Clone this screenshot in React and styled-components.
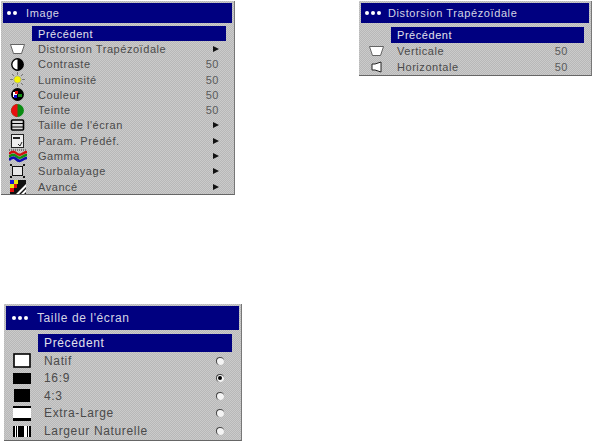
import React from 'react'
import styled, { createGlobalStyle } from 'styled-components'

const Global = createGlobalStyle`
html, body {
  margin: 0;
  padding: 0;
  background: #fff;
  overflow: hidden;
}
`

const TrapezeV = () => (
  <svg width="15" height="10" viewBox="0 0 15 10">
    <path d="M0.5 0.5H14.5L11.5 9.5H3.5Z" fill="#fff" stroke="#444" strokeWidth="0.8" />
  </svg>
)
const TrapezeH = () => (
  <svg width="11" height="12" viewBox="0 0 11 12">
    <path d="M10 1V11L4 9H1V3H4Z" fill="#fff" stroke="#222" strokeWidth="1" />
  </svg>
)
const Contrast = () => (
  <svg width="13" height="13" viewBox="0 0 13 13">
    <circle cx="6.5" cy="6.5" r="6.4" fill="#000" />
    <path d="M6.5 1.5A5 5 0 0 0 6.5 11.5Z" fill="#fff" />
  </svg>
)
const Sun = () => (
  <svg width="15" height="15" viewBox="0 0 15 15">
    <path d="M7.5 0V3M7.5 12V15M0 7.5H3M12 7.5H15M2 2L4 4M11 11L13 13M13 2L11 4M4 11L2 13" stroke="#777" strokeWidth="1" />
    <circle cx="7.5" cy="7.5" r="3.6" fill="#f6f600" stroke="#999" strokeWidth="0.6" />
  </svg>
)
const ColorWheel = () => (
  <svg width="13" height="13" viewBox="0 0 13 13">
    <circle cx="6.5" cy="6.5" r="6.4" fill="#000" />
    <path d="M2 4H6V9H2Z" fill="#fff" />
    <rect x="3" y="7" width="3" height="3" fill="#1010d0" />
    <rect x="4" y="3" width="3" height="3" fill="#e01010" />
    <rect x="7" y="6" width="4" height="3" fill="#109010" />
  </svg>
)
const Tint = () => (
  <svg width="13" height="13" viewBox="0 0 13 13">
    <circle cx="6.5" cy="6.5" r="6.4" fill="#0a8a12" />
    <path d="M6.5 0.1A6.4 6.4 0 0 0 6.5 12.9Z" fill="#e81010" />
  </svg>
)
const ScreenSize = () => (
  <svg width="15" height="12" viewBox="0 0 15 12">
    <rect x="1.5" y="1" width="12" height="10" rx="1" fill="#ddd" stroke="#000" strokeWidth="1.6" />
    <path d="M1 4.5H14M1 8H14" stroke="#000" strokeWidth="1.2" />
  </svg>
)
const Preset = () => (
  <svg width="13" height="14" viewBox="0 0 13 14">
    <rect x="0.5" y="0.5" width="12" height="13" fill="#eee" stroke="#222" />
    <rect x="2" y="3" width="7" height="2" fill="#222" />
    <path d="M7 10L9 12L11 8" fill="none" stroke="#222" />
  </svg>
)
const Gamma = () => (
  <svg width="18" height="14" viewBox="0 0 18 14">
    <path d="M0 1H18" stroke="#333" strokeDasharray="1 1" />
    <path d="M0 5Q4 1 7 4T13 5T18 3" fill="none" stroke="#d01010" strokeWidth="2.4" />
    <path d="M0 8Q4 4 7 7T13 8T18 6" fill="none" stroke="#109010" strokeWidth="2.4" />
    <path d="M0 11Q4 7 7 10T13 11T18 9" fill="none" stroke="#1010b0" strokeWidth="2.6" />
  </svg>
)
const Overscan = () => (
  <svg width="15" height="14" viewBox="0 0 15 14">
    <rect x="2.5" y="2.5" width="10" height="9" fill="#e8e8e8" stroke="#111" />
    <rect x="0" y="0" width="2" height="2" fill="#111" />
    <rect x="13" y="0" width="2" height="2" fill="#111" />
    <rect x="0" y="12" width="2" height="2" fill="#111" />
    <rect x="13" y="12" width="2" height="2" fill="#111" />
  </svg>
)
const Advanced = () => (
  <svg width="16" height="14" viewBox="0 0 16 14">
    <rect width="16" height="14" fill="#111" />
    <path d="M6 14L16 4V7L9 14ZM11 14L16 9V12L14 14Z" fill="#fff" />
    <rect x="0" y="0" width="4" height="4" fill="#1818d0" />
    <rect x="4" y="0" width="4" height="4" fill="#e8e810" />
    <rect x="0" y="4" width="4" height="4" fill="#e8e810" />
    <rect x="4" y="4" width="3" height="4" fill="#e01010" />
    <rect x="0" y="8" width="4" height="4" fill="#e01010" />
  </svg>
)
const WhiteBox = () => (
  <svg width="18" height="15" viewBox="0 0 18 15">
    <rect x="1" y="1" width="16" height="13" fill="#fff" stroke="#000" strokeWidth="1.6" />
  </svg>
)
const BlackWide = () => (
  <svg width="18" height="11" viewBox="0 0 18 11">
    <rect width="18" height="11" fill="#000" />
  </svg>
)
const BlackSquare = () => (
  <svg width="16" height="13" viewBox="0 0 16 13">
    <rect width="16" height="13" fill="#000" />
  </svg>
)
const ExtraLarge = () => (
  <svg width="18" height="15" viewBox="0 0 18 15">
    <rect width="18" height="15" fill="#fff" />
    <rect width="18" height="2" fill="#000" />
    <rect y="12" width="18" height="3" fill="#000" />
  </svg>
)
const NaturalWidth = () => (
  <svg width="18" height="11" viewBox="0 0 18 11">
    <rect width="18" height="11" fill="#fff" />
    <path d="M0 0H2V11H0ZM3 0H4V11H3ZM5 0H11V11H5ZM14 0H15V11H14ZM16 0H18V11H16Z" fill="#000" />
  </svg>
)

const Page = styled.div`
  display: grid;
  grid-template-columns: 359px 233px;
  align-items: start;
  height: 441px;
  overflow: hidden;
  font-family: "Liberation Sans", Arial, sans-serif;
`

const LeftColumn = styled.div`
  display: flex;
  flex-direction: column;
  gap: 109px;
  padding: 1px 0 0 1px;
`

const Panel = styled.div`
  width: ${(p) => p.$width}px;
  margin-left: ${(p) => p.$indent || 0}px;
  margin-top: ${(p) => p.$top || 0}px;
  flex: none;
  box-sizing: border-box;
  padding: 2px 2px 0;
  border-right: 1px solid #777;
  border-bottom: 1px solid #666;
  background-color: #c2c2c2;
  background-image: repeating-conic-gradient(#b8b8b8 0 25%, #cbcbcb 0 50%);
  background-size: 2px 2px;
`

const TitleBar = styled.div`
  display: flex;
  align-items: center;
  gap: ${(p) => p.$gap}px;
  height: ${(p) => p.$height}px;
  padding-left: ${(p) => p.$pad}px;
  background: #000080;
  color: #d4d4e4;
  font-size: ${(p) => p.$size}px;
  letter-spacing: ${(p) => p.$spacing}px;
`

const Dots = styled.span`
  display: flex;
  gap: 2px;
`

const Dot = styled.i`
  width: 4px;
  height: 4px;
  border-radius: 50%;
  background: #fff;
`

const Rows = styled.div`
  padding: ${(p) => p.$pad}px ${(p) => p.$right}px 0 0;
`

const Row = styled.div`
  display: flex;
  align-items: center;
  height: ${(p) => p.$height}px;
  font-size: ${(p) => p.$size}px;
  letter-spacing: ${(p) => p.$spacing}px;
  color: #4a4a4a;
`

const IconCell = styled.span`
  width: ${(p) => p.$width}px;
  flex: none;
  display: flex;
  justify-content: center;
  align-items: center;
  filter: blur(0.25px);
`

const Label = styled.span`
  flex: 1;
  padding-left: ${(p) => p.$inset}px;
  white-space: nowrap;
  height: 100%;
  display: flex;
  align-items: center;
  ${(p) =>
    p.$active &&
    `
    background: #000080;
    color: #e0e0ec;
  `}
`

const Value = styled.span`
  width: 40px;
  flex: none;
  display: flex;
  align-items: center;
  justify-content: flex-end;
  padding-right: ${(p) => p.$right}px;
  box-sizing: border-box;
  color: #5a5a5a;
`

const Arrow = styled.i`
  width: 0;
  height: 0;
  border-left: 6px solid #111;
  border-top: 3px solid transparent;
  border-bottom: 3px solid transparent;
`

const Radio = styled.i`
  position: relative;
  width: 8px;
  height: 8px;
  border-radius: 50%;
  background: #f4f4f4;
  border-top: 1px solid #444;
  border-left: 1px solid #444;
  box-sizing: border-box;
  ${(p) =>
    p.$on &&
    `
    &::after {
      content: '';
      position: absolute;
      left: 1px;
      top: 1px;
      width: 4px;
      height: 4px;
      border-radius: 50%;
      background: #000;
    }
  `}
`

const imageRows = [
  { icon: TrapezeV, label: 'Distorsion Trapézoïdale', arrow: true },
  { icon: Contrast, label: 'Contraste', value: 50 },
  { icon: Sun, label: 'Luminosité', value: 50 },
  { icon: ColorWheel, label: 'Couleur', value: 50 },
  { icon: Tint, label: 'Teinte', value: 50 },
  { icon: ScreenSize, label: "Taille de l'écran", arrow: true },
  { icon: Preset, label: 'Param. Prédéf.', arrow: true },
  { icon: Gamma, label: 'Gamma', arrow: true },
  { icon: Overscan, label: 'Surbalayage', arrow: true },
  { icon: Advanced, label: 'Avancé', arrow: true },
]

const keystoneRows = [
  { icon: TrapezeV, label: 'Verticale', value: 50 },
  { icon: TrapezeH, label: 'Horizontale', value: 50 },
]

const sizeRows = [
  { icon: WhiteBox, label: 'Natif', radio: true },
  { icon: BlackWide, label: '16:9', radio: true, on: true },
  { icon: BlackSquare, label: '4:3', radio: true },
  { icon: ExtraLarge, label: 'Extra-Large', radio: true },
  { icon: NaturalWidth, label: 'Largeur Naturelle', radio: true },
]

const Menu = ({ title, dots, rows, width, indent, top, bar, row, iconWidth, pad, right, valueRight }) => (
  <Panel $width={width} $indent={indent} $top={top}>
    <TitleBar $height={bar.height} $size={bar.size} $gap={bar.gap} $pad={bar.pad} $spacing={bar.spacing}>
      <Dots>
        {Array.from({ length: dots }).map((_, i) => (
          <Dot key={i} />
        ))}
      </Dots>
      {title}
    </TitleBar>
    <Rows $pad={pad} $right={right}>
      <Row $height={row.height} $size={row.size} $spacing={row.spacing}>
        <IconCell $width={iconWidth} />
        <Label $active $inset={6}>Précédent</Label>
      </Row>
      {rows.map((r) => (
        <Row key={r.label} $height={row.height} $size={row.size} $spacing={row.spacing}>
          <IconCell $width={iconWidth}>
            <r.icon />
          </IconCell>
          <Label $inset={6}>{r.label}</Label>
          <Value $right={valueRight}>
            {r.value}
            {r.arrow && <Arrow />}
            {r.radio && <Radio $on={r.on} />}
          </Value>
        </Row>
      ))}
    </Rows>
  </Panel>
)

export default function App() {
  return (
    <Page>
      <Global />
      <LeftColumn>
        <Menu
          title="Image"
          dots={2}
          rows={imageRows}
          width={234}
          bar={{ height: 20, size: 11, gap: 9, pad: 4, spacing: 0.6 }}
          row={{ height: 15.3, size: 11, spacing: 0.55 }}
          iconWidth={29}
          pad={3}
          right={6}
          valueRight={7}
        />
        <Menu
          title="Taille de l'écran"
          dots={3}
          rows={sizeRows}
          width={238}
          indent={3}
          bar={{ height: 24, size: 12, gap: 9, pad: 6, spacing: 0.6 }}
          row={{ height: 17.6, size: 12, spacing: 0.65 }}
          iconWidth={32}
          pad={4}
          right={7}
          valueRight={8}
        />
      </LeftColumn>
      <Menu
        title="Distorsion Trapézoïdale"
        dots={3}
        rows={keystoneRows}
        width={233}
        top={1}
        bar={{ height: 20, size: 11, gap: 7, pad: 4, spacing: 0.6 }}
        row={{ height: 16, size: 11, spacing: 0.55 }}
        iconWidth={30}
        pad={4}
        right={5}
        valueRight={16}
      />
    </Page>
  )
}
